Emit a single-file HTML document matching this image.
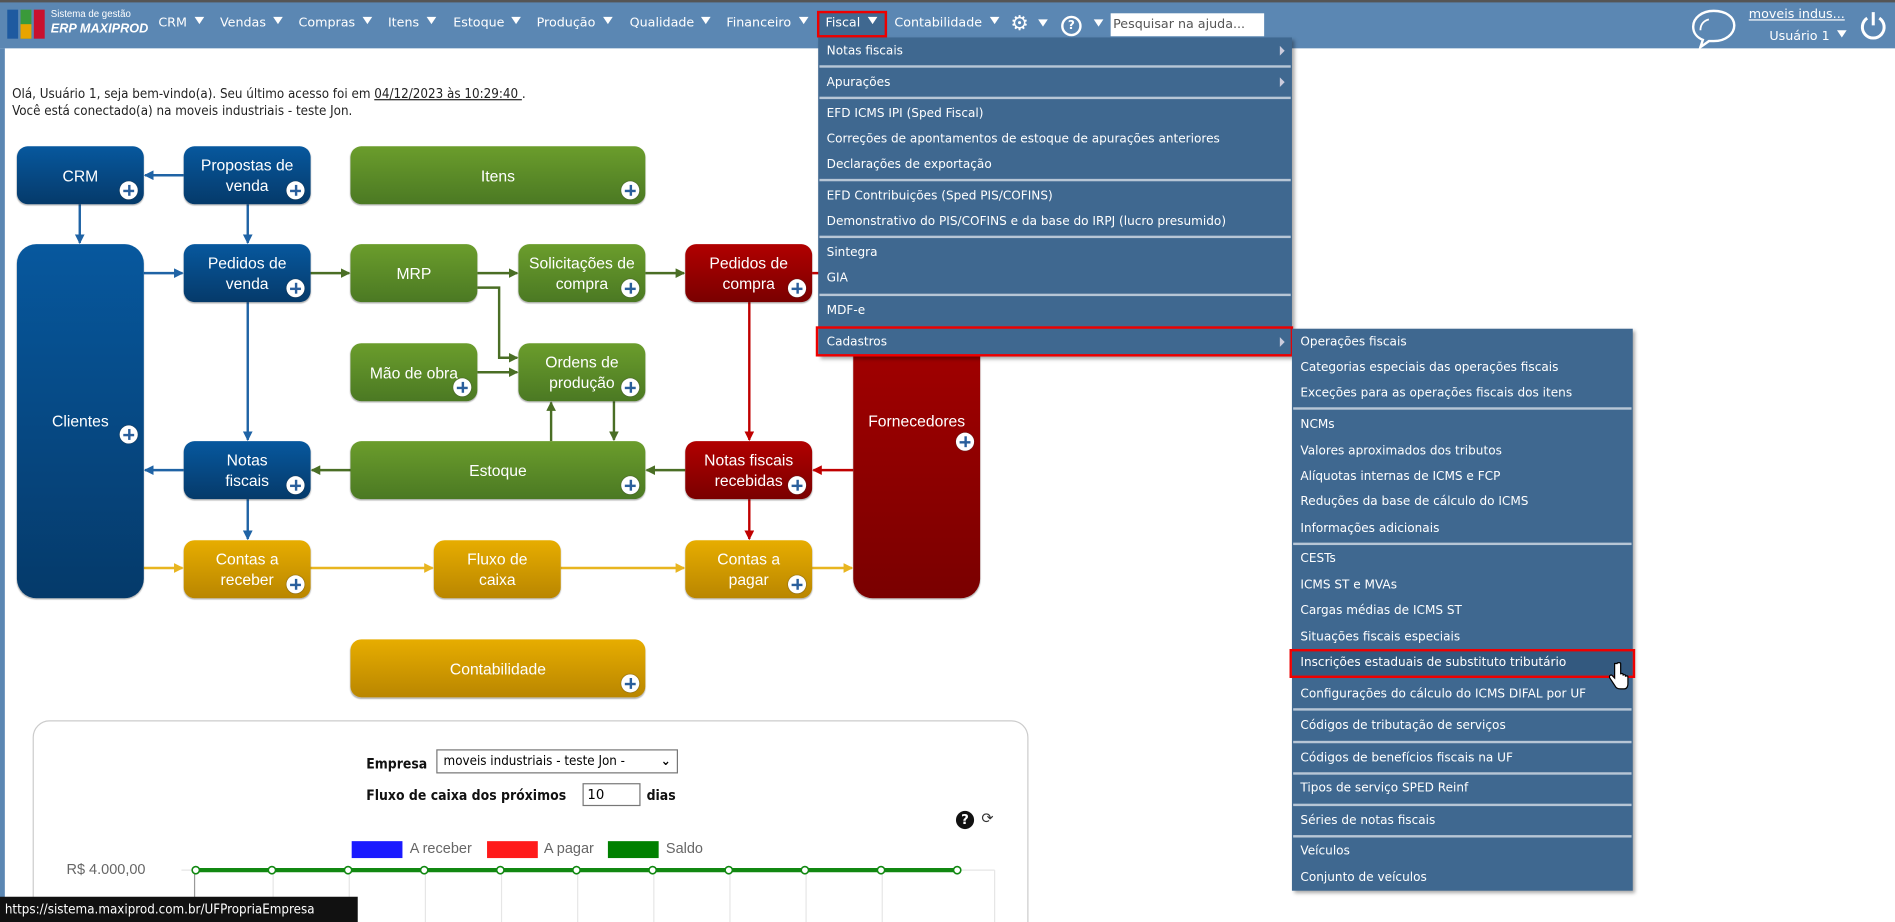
<!DOCTYPE html>
<html><head><meta charset="utf-8"><style>
html,body{margin:0;padding:0;width:1895px;height:922px;overflow:hidden;background:#fff}
#w{position:absolute;left:0;top:0;width:1568px;height:763px;overflow:hidden;transform:scale(1.20855);transform-origin:0 0;font-family:"DejaVu Sans","Liberation Sans",sans-serif;}
.a{position:absolute;white-space:nowrap}
#top{position:absolute;left:0;top:0;width:1568px;height:40px;background:#5b87b3;border-top:2px solid #555;box-sizing:border-box}
#lb{position:absolute;left:0;top:40px;width:4px;height:723px;background:#5b87b3}
.nav{position:absolute;top:13px;color:#fff;font-size:10.5px}
.tri{display:inline-block;width:0;height:0;border-left:4px solid transparent;border-right:4px solid transparent;border-top:6px solid #fff;margin-left:6px;vertical-align:2px}
.menu{position:absolute;background:#3f6890;box-shadow:2px 2px 3px rgba(0,0,0,.35)}
.it{position:absolute;left:0;right:0;color:#fff;font-size:10px;padding-left:7px;height:21px;line-height:21px;white-space:nowrap}
.sp{position:absolute;left:1px;right:1px;height:2px;background:#b7c6d6}
.arr:after{content:"";position:absolute;right:6px;top:6px;border-top:4px solid transparent;border-bottom:4px solid transparent;border-left:4px solid #ccd;}
.box{position:absolute;border-radius:9px;color:#fff;font-family:"Liberation Sans",Arial,sans-serif;font-size:13px;display:flex;align-items:center;justify-content:center;text-align:center;line-height:17px;box-shadow:0 1px 1px rgba(0,0,0,.3)}
.b{background:linear-gradient(#07589e,#053a6a)}
.g{background:linear-gradient(#6b9d2c,#4b7923)}
.r{background:linear-gradient(#b10000,#7a0000)}
.y{background:linear-gradient(#e7ad00,#b98600)}
.p{position:absolute;right:5px;bottom:4px;width:15px;height:15px;border-radius:50%;background:#fff;box-shadow:0 0 1px #333}
.p:before,.p:after{content:"";position:absolute;background:#2a5f9c}
.p:before{left:3px;top:6.5px;width:9px;height:2px}
.p:after{left:6.5px;top:3px;width:2px;height:9px}
.lbl{position:absolute;font-size:11.5px;font-weight:bold;color:#111;font-family:"DejaVu Sans Condensed","DejaVu Sans",sans-serif}
</style></head><body><div id="w">
<div id="top"></div><div id="lb"></div>
<div class="a" style="left:6px;top:8px;width:32px;height:24px">
<div style="position:absolute;left:0;top:0;width:9px;height:24px;background:#1e5aa0"></div>
<div style="position:absolute;left:11px;top:0;width:9px;height:24px;background:#3a9a3a"></div>
<div style="position:absolute;left:11px;top:12px;width:9px;height:12px;background:#e8a400"></div>
<div style="position:absolute;left:22px;top:0;width:9px;height:24px;background:#c8102e"></div></div>
<div class="a" style="left:42px;top:7px;color:#fff;font-size:8px;font-family:'Liberation Sans',sans-serif">Sistema de gestão</div>
<div class="a" style="left:42px;top:18px;color:#fff;font-size:10.5px;font-weight:bold;font-style:italic;font-family:'Liberation Sans',sans-serif">ERP MAXIPROD</div>
<div class="nav" style="left:131px">CRM<span class="tri"></span></div>
<div class="nav" style="left:182px">Vendas<span class="tri"></span></div>
<div class="nav" style="left:247px">Compras<span class="tri"></span></div>
<div class="nav" style="left:321px">Itens<span class="tri"></span></div>
<div class="nav" style="left:375px">Estoque<span class="tri"></span></div>
<div class="nav" style="left:444px">Produção<span class="tri"></span></div>
<div class="nav" style="left:521px">Qualidade<span class="tri"></span></div>
<div class="nav" style="left:601px">Financeiro<span class="tri"></span></div>
<div class="a" style="left:676px;top:9px;width:58px;height:22px;background:#3f6890;border:2px solid #e00;box-sizing:border-box"></div>
<div class="nav" style="left:683px">Fiscal<span class="tri"></span></div>
<div class="nav" style="left:740px">Contabilidade<span class="tri"></span></div>
<div class="a" style="left:836px;top:11px;color:#fff;font-size:17px;line-height:18px">⚙</div><span class="tri a" style="left:853px;top:16px"></span>
<div class="a" style="left:878px;top:13px;width:13px;height:13px;border:2px solid #fff;border-radius:50%;color:#fff;font-size:10px;text-align:center;line-height:13px;font-weight:bold">?</div><span class="tri a" style="left:899px;top:16px"></span>
<div class="a" style="left:919px;top:11px;width:127px;height:19px;background:#fff;font-size:10.5px;color:#555;line-height:19px;padding-left:2px;box-sizing:border-box">Pesquisar na ajuda...</div>
<svg class="a" style="left:1398px;top:6px" width="40" height="36"><path d="M20 3C10 3 3 9 3 16c0 5 3 9 8 11l-2 6 7-5c1 0 3 0 4 0 10 0 17-6 17-13S30 3 20 3z" fill="none" stroke="#fff" stroke-width="2"/><path d="M9 19c0-5 3-8 7-9" fill="none" stroke="#fff" stroke-width="1.5"/></svg>
<div class="a" style="left:1447px;top:6px;color:#fff;font-size:10.5px;text-decoration:underline">moveis indus...</div>
<div class="a" style="left:1464px;top:24px;color:#fff;font-size:10.5px">Usuário 1<span class="tri"></span></div>
<svg class="a" style="left:1538px;top:8px" width="24" height="26"><path d="M7 7a9 9 0 1 0 10 0" fill="none" stroke="#fff" stroke-width="2.5"/><path d="M12 2v11" stroke="#fff" stroke-width="2.5"/></svg>

<div class="a" style="left:10px;top:71px;font-size:11px;color:#222;font-family:'DejaVu Sans Condensed','DejaVu Sans',sans-serif;line-height:14px">Olá, Usuário 1, seja bem-vindo(a). Seu último acesso foi em <u>04/12/2023 às 10:29:40 </u>.<br>Você está conectado(a) na moveis industriais - teste Jon.</div>

<svg class="a" style="left:0;top:0" width="900" height="600">
<defs>
<marker id="mb" markerWidth="8" markerHeight="8" refX="7" refY="4" orient="auto" markerUnits="userSpaceOnUse"><path d="M0 0L8 4L0 8z" fill="#1f63a5"/></marker>
<marker id="mg" markerWidth="8" markerHeight="8" refX="7" refY="4" orient="auto" markerUnits="userSpaceOnUse"><path d="M0 0L8 4L0 8z" fill="#4a6e25"/></marker>
<marker id="mr" markerWidth="8" markerHeight="8" refX="7" refY="4" orient="auto" markerUnits="userSpaceOnUse"><path d="M0 0L8 4L0 8z" fill="#c00000"/></marker>
<marker id="my" markerWidth="8" markerHeight="8" refX="7" refY="4" orient="auto" markerUnits="userSpaceOnUse"><path d="M0 0L8 4L0 8z" fill="#e8b520"/></marker>
</defs>
<g stroke="#1f63a5" stroke-width="2" fill="none" marker-end="url(#mb)">
<path d="M152 145H120"/><path d="M66 169V201"/><path d="M205 169V201"/><path d="M119 226H151"/><path d="M205 250V364"/><path d="M152 389H120"/><path d="M205 413V446"/></g>
<g stroke="#4a6e25" stroke-width="2" fill="none" marker-end="url(#mg)">
<path d="M257 226H289"/><path d="M395 226H428"/><path d="M534 226H566"/><path d="M395 238H413V296H428"/><path d="M395 308H428"/><path d="M456 365V333"/><path d="M508 332V364"/><path d="M290 389H258"/><path d="M567 389H535"/></g>
<g stroke="#c00000" stroke-width="2" fill="none" marker-end="url(#mr)">
<path d="M620 250V364"/><path d="M706 389H673"/><path d="M620 413V446"/><path d="M672 226H705"/></g>
<g stroke="#e8b520" stroke-width="2" fill="none" marker-end="url(#my)">
<path d="M119 470H151"/><path d="M257 470H358"/><path d="M464 470H566"/><path d="M672 470H705"/></g>
</svg>
<div class="box b" style="left:14px;top:121px;width:105px;height:48px">CRM<span class="p"></span></div>
<div class="box b" style="left:152px;top:121px;width:105px;height:48px">Propostas de<br>venda<span class="p"></span></div>
<div class="box g" style="left:290px;top:121px;width:244px;height:48px">Itens<span class="p"></span></div>
<div class="box b" style="left:14px;top:202px;width:105px;height:293px;border-radius:16px">Clientes<span class="p" style="bottom:128px"></span></div>
<div class="box b" style="left:152px;top:202px;width:105px;height:48px">Pedidos de<br>venda<span class="p"></span></div>
<div class="box g" style="left:290px;top:202px;width:105px;height:48px">MRP</div>
<div class="box g" style="left:429px;top:202px;width:105px;height:48px">Solicitações de<br>compra<span class="p"></span></div>
<div class="box r" style="left:567px;top:202px;width:105px;height:48px">Pedidos de<br>compra<span class="p"></span></div>
<div class="box g" style="left:290px;top:284px;width:105px;height:48px">Mão de obra<span class="p"></span></div>
<div class="box g" style="left:429px;top:284px;width:105px;height:48px">Ordens de<br>produção<span class="p"></span></div>
<div class="box b" style="left:152px;top:365px;width:105px;height:48px">Notas<br>fiscais<span class="p"></span></div>
<div class="box g" style="left:290px;top:365px;width:244px;height:48px">Estoque<span class="p"></span></div>
<div class="box r" style="left:567px;top:365px;width:105px;height:48px">Notas fiscais<br>recebidas<span class="p"></span></div>
<div class="box r" style="left:706px;top:202px;width:105px;height:293px;border-radius:16px">Fornecedores<span class="p" style="bottom:122px"></span></div>
<div class="box y" style="left:152px;top:447px;width:105px;height:48px">Contas a<br>receber<span class="p"></span></div>
<div class="box y" style="left:359px;top:447px;width:105px;height:48px">Fluxo de<br>caixa</div>
<div class="box y" style="left:567px;top:447px;width:105px;height:48px">Contas a<br>pagar<span class="p"></span></div>
<div class="box y" style="left:290px;top:529px;width:244px;height:48px">Contabilidade<span class="p"></span></div>

<div class="a" style="left:27px;top:596px;width:822px;height:200px;border:1px solid #ccc;border-radius:14px"></div>
<div class="lbl" style="left:303px;top:625px">Empresa</div>
<div class="a" style="left:361px;top:620px;width:200px;height:20px;border:1px solid #777;box-sizing:border-box;font-size:11px;line-height:18px;padding-left:5px;font-family:'DejaVu Sans Condensed',sans-serif">moveis industriais - teste Jon -<span style="position:absolute;right:5px;font-weight:bold">⌄</span></div>
<div class="lbl" style="left:303px;top:651px">Fluxo de caixa dos próximos</div>
<div class="a" style="left:482px;top:648px;width:48px;height:19px;border:1px solid #777;box-sizing:border-box;font-size:11px;line-height:17px;padding-left:3px">10</div>
<div class="lbl" style="left:535px;top:651px">dias</div>
<div class="a" style="left:791px;top:671px;width:15px;height:15px;border-radius:50%;background:#111;color:#fff;font-size:11px;font-weight:bold;text-align:center;line-height:15px">?</div>
<div class="a" style="left:812px;top:670px;font-size:12px;color:#333">⟳</div>
<div class="a" style="left:291px;top:696px;width:42px;height:14px;background:#1a1aff"></div>
<div class="a" style="left:339px;top:695px;font-size:12px;color:#666;font-family:'Liberation Sans',sans-serif">A receber</div>
<div class="a" style="left:403px;top:696px;width:42px;height:14px;background:#ff1a1a"></div>
<div class="a" style="left:450px;top:695px;font-size:12px;color:#666;font-family:'Liberation Sans',sans-serif">A pagar</div>
<div class="a" style="left:503px;top:696px;width:42px;height:14px;background:#008000"></div>
<div class="a" style="left:551px;top:695px;font-size:12px;color:#666;font-family:'Liberation Sans',sans-serif">Saldo</div>
<div class="a" style="left:55px;top:712px;font-size:12px;color:#666;font-family:'Liberation Sans',sans-serif">R$ 4.000,00</div>
<svg class="a" style="left:150px;top:712px" width="680" height="52">
<g stroke="#e6e6e6" stroke-width="1"><path d="M76 8V52M139 8V52M202 8V52M265 8V52M328 8V52M391 8V52M454 8V52M517 8V52M580 8V52M673 8V52M0 8H673"/></g>
<path d="M11 8V52" stroke="#999"/>
<path d="M12 8H643" stroke="#118811" stroke-width="3.5"/>
<g fill="#fff" stroke="#118811" stroke-width="1.3">
<circle cx="12" cy="8" r="3"/><circle cx="75" cy="8" r="3"/><circle cx="138" cy="8" r="3"/><circle cx="201" cy="8" r="3"/><circle cx="264" cy="8" r="3"/><circle cx="327" cy="8" r="3"/><circle cx="390" cy="8" r="3"/><circle cx="453" cy="8" r="3"/><circle cx="516" cy="8" r="3"/><circle cx="579" cy="8" r="3"/><circle cx="642" cy="8" r="3"/></g></svg>
<div class="a" style="left:0;top:742px;width:296px;height:21px;background:#111;color:#fff;font-size:11px;line-height:21px;padding-left:4px;box-sizing:border-box;font-family:'DejaVu Sans Condensed',sans-serif">https://sistema.maxiprod.com.br/UFPropriaEmpresa</div>

<!-- fiscal menu (top 31) -->
<div class="menu" style="left:677px;top:31px;width:392px;height:264px">
<div class="it arr" style="top:0.5px">Notas fiscais</div><div class="sp" style="top:23px"></div>
<div class="it arr" style="top:26.5px">Apurações</div><div class="sp" style="top:49px"></div>
<div class="it" style="top:52.5px">EFD ICMS IPI (Sped Fiscal)</div>
<div class="it" style="top:73.5px">Correções de apontamentos de estoque de apurações anteriores</div>
<div class="it" style="top:94.5px">Declarações de exportação</div><div class="sp" style="top:117px"></div>
<div class="it" style="top:120.5px">EFD Contribuições (Sped PIS/COFINS)</div>
<div class="it" style="top:141.5px">Demonstrativo do PIS/COFINS e da base do IRPJ (lucro presumido)</div><div class="sp" style="top:164px"></div>
<div class="it" style="top:167.5px">Sintegra</div>
<div class="it" style="top:188.5px">GIA</div><div class="sp" style="top:211.5px"></div>
<div class="it" style="top:215.5px">MDF-e</div>
<div class="it arr" style="top:241.5px">Cadastros</div>
</div>
<div class="a" style="left:675px;top:270px;width:395px;height:25px;border:2px solid #e00;box-sizing:border-box"></div>
<!-- submenu (top 272) -->
<div class="menu" style="left:1069px;top:272px;width:282px;height:465px">
<div class="it" style="top:0.5px">Operações fiscais</div>
<div class="it" style="top:21.5px">Categorias especiais das operações fiscais</div>
<div class="it" style="top:42.5px">Exceções para as operações fiscais dos itens</div><div class="sp" style="top:65px"></div>
<div class="it" style="top:68.5px">NCMs</div>
<div class="it" style="top:90.5px">Valores aproximados dos tributos</div>
<div class="it" style="top:111.5px">Alíquotas internas de ICMS e FCP</div>
<div class="it" style="top:132.5px">Reduções da base de cálculo do ICMS</div>
<div class="it" style="top:154.5px">Informações adicionais</div><div class="sp" style="top:176.5px"></div>
<div class="it" style="top:179.5px">CESTs</div>
<div class="it" style="top:201.5px">ICMS ST e MVAs</div>
<div class="it" style="top:222.5px">Cargas médias de ICMS ST</div>
<div class="it" style="top:244.5px">Situações fiscais especiais</div>
<div class="it" style="top:265.5px;background:#33597f">Inscrições estaduais de substituto tributário</div>
<div class="it" style="top:291.5px">Configurações do cálculo do ICMS DIFAL por UF</div><div class="sp" style="top:314px"></div>
<div class="it" style="top:317.5px">Códigos de tributação de serviços</div><div class="sp" style="top:340.5px"></div>
<div class="it" style="top:344.5px">Códigos de benefícios fiscais na UF</div><div class="sp" style="top:366.5px"></div>
<div class="it" style="top:369.5px">Tipos de serviço SPED Reinf</div><div class="sp" style="top:392.5px"></div>
<div class="it" style="top:396.5px">Séries de notas fiscais</div><div class="sp" style="top:418.5px"></div>
<div class="it" style="top:421.5px">Veículos</div>
<div class="it" style="top:443.5px">Conjunto de veículos</div>
</div>
<div class="a" style="left:1067px;top:537px;width:286px;height:24px;border:2px solid #e00;box-sizing:border-box"></div>
<svg class="a" style="left:1331px;top:547px" width="18" height="24"><path d="M5 2v12l-2-2c-1-1-3 0-2 2l4 6c1 2 2 3 5 3h3c2 0 3-2 3-4v-6c0-1-2-1-2 0v-1c0-1-2-1-2 0v-1c0-1-2-1-2 0V2c0-1-3-1-3 0z" fill="#fff" stroke="#000" stroke-width="1"/></svg>
</div></body></html>
